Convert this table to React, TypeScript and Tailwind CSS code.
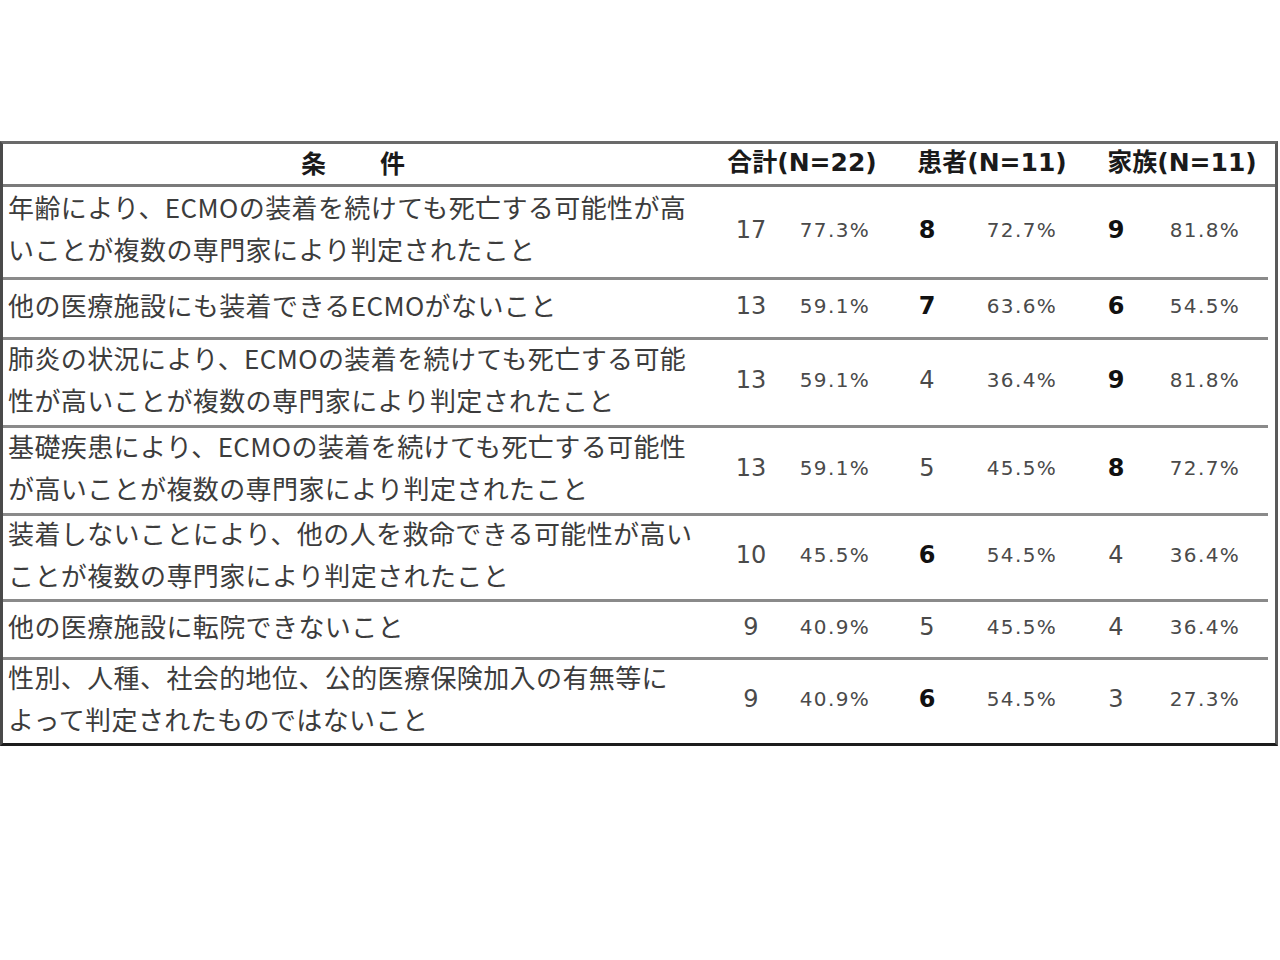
import React from "react";

type Row = {
  lines: string[];
  h: string;
  total: string;
  tp: string;
  p: string;
  pb: boolean;
  pp: string;
  f: string;
  fb: boolean;
  fp: string;
};

const rows: Row[] = [
  {
    lines: ["年齢により、ECMOの装着を続けても死亡する可能性が高", "いことが複数の専門家により判定されたこと"],
    h: "h-[93px]", total: "17", tp: "77.3%", p: "8", pb: true, pp: "72.7%", f: "9", fb: true, fp: "81.8%",
  },
  {
    lines: ["他の医療施設にも装着できるECMOがないこと"],
    h: "h-[60px]", total: "13", tp: "59.1%", p: "7", pb: true, pp: "63.6%", f: "6", fb: true, fp: "54.5%",
  },
  {
    lines: ["肺炎の状況により、ECMOの装着を続けても死亡する可能", "性が高いことが複数の専門家により判定されたこと"],
    h: "h-[88px]", total: "13", tp: "59.1%", p: "4", pb: false, pp: "36.4%", f: "9", fb: true, fp: "81.8%",
  },
  {
    lines: ["基礎疾患により、ECMOの装着を続けても死亡する可能性", "が高いことが複数の専門家により判定されたこと"],
    h: "h-[88px]", total: "13", tp: "59.1%", p: "5", pb: false, pp: "45.5%", f: "8", fb: true, fp: "72.7%",
  },
  {
    lines: ["装着しないことにより、他の人を救命できる可能性が高い", "ことが複数の専門家により判定されたこと"],
    h: "h-[86px]", total: "10", tp: "45.5%", p: "6", pb: true, pp: "54.5%", f: "4", fb: false, fp: "36.4%",
  },
  {
    lines: ["他の医療施設に転院できないこと"],
    h: "h-[58px]", total: "9", tp: "40.9%", p: "5", pb: false, pp: "45.5%", f: "4", fb: false, fp: "36.4%",
  },
  {
    lines: ["性別、人種、社会的地位、公的医療保険加入の有無等に", "よって判定されたものではないこと"],
    h: "h-[83px]", total: "9", tp: "40.9%", p: "6", pb: true, pp: "54.5%", f: "3", fb: false, fp: "27.3%",
  },
];

function Num({ v, bold, w }: { v: string; bold: boolean; w: string }) {
  return (
    <div
      className={`${w} flex shrink-0 justify-center whitespace-nowrap font-['DejaVu_Sans',Verdana,sans-serif] text-[24px] ${
        bold ? "font-bold text-[#111]" : "font-normal text-[#4a4a4a]"
      }`}
    >
      {v}
    </div>
  );
}

function Pct({ v, w }: { v: string; w: string }) {
  return (
    <div
      className={`${w} flex shrink-0 justify-center whitespace-nowrap font-['DejaVu_Sans',Verdana,sans-serif] text-[20px] tracking-[1.4px] text-[#4a4a4a]`}
    >
      {v}
    </div>
  );
}

export default function App() {
  return (
    <div className="min-h-[960px] w-[1280px] bg-white pt-[141px]">
      <div className="w-[1278px] border-[3px] border-[#4a4a4a] border-t-[#6a6a6a] border-b-[#1c1c1c] border-r-[#5a5a5a]">
        {/* header */}
        <div className="flex h-[43px] items-center border-b-[3px] border-[#7a7a7a] pb-[3px] font-['DejaVu_Sans','Noto_Sans_CJK_JP',sans-serif] text-[25px] font-bold text-[#1a1a1a]">
          <div className="flex w-[700px] shrink-0 justify-center gap-[54px] font-['Noto_Sans_CJK_JP',sans-serif]">
            <span>条</span>
            <span>件</span>
          </div>
          <div className="flex w-[198px] shrink-0 justify-center whitespace-nowrap">合計(N=22)</div>
          <div className="flex w-[182px] shrink-0 justify-center whitespace-nowrap">患者(N=11)</div>
          <div className="flex w-[198px] shrink-0 justify-center whitespace-nowrap">家族(N=11)</div>
        </div>
        {/* rows */}
        {rows.map((r, i) => (
          <div
            key={i}
            className={`mr-[7px] flex items-center pb-[5px] ${r.h} ${
              i < rows.length - 1 ? "border-b-[3px] border-[#8a8a8a]" : ""
            }`}
          >
            <div className="w-[709px] shrink-0 whitespace-nowrap pb-[3px] pl-[5px] font-['Noto_Sans_CJK_JP',sans-serif] text-[26px] leading-[42px] tracking-[0.4px] text-[#3c3c3c]">
              {r.lines.map((l, j) => (
                <div key={j}>{l}</div>
              ))}
            </div>
            <Num v={r.total} bold={false} w="w-[78px]" />
            <Pct v={r.tp} w="w-[90px]" />
            <Num v={r.p} bold={r.pb} w="w-[94px]" />
            <Pct v={r.pp} w="w-[96px]" />
            <Num v={r.f} bold={r.fb} w="w-[92px]" />
            <Pct v={r.fp} w="w-[86px]" />
          </div>
        ))}
      </div>
    </div>
  );
}
